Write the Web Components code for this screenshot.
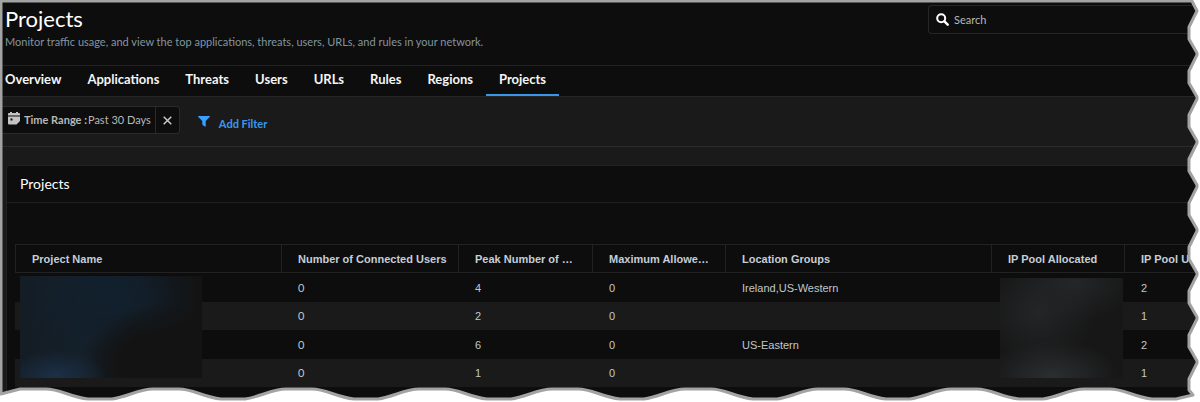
<!DOCTYPE html>
<html lang="en">
<head>
<meta charset="utf-8">
<title>Projects</title>
<style>
html, body { margin: 0; height: 100%; background: #fff; }
body { font-family: Lato, sans-serif; color: #fff; overflow: hidden; }
</style>
</head>
<body>
<app-shell>
  <page-header slot="header" heading="Projects" summary="Monitor traffic usage, and view the top applications, threats, users, URLs, and rules in your network.">
    <search-box></search-box>
  </page-header>
  <tab-bar slot="header">
    <tab-link>Overview</tab-link>
    <tab-link>Applications</tab-link>
    <tab-link>Threats</tab-link>
    <tab-link>Users</tab-link>
    <tab-link>URLs</tab-link>
    <tab-link>Rules</tab-link>
    <tab-link>Regions</tab-link>
    <tab-link active>Projects</tab-link>
  </tab-bar>
  <filter-bar slot="header">
    <filter-chip name="Time Range :">Past 30 Days</filter-chip>
    <add-filter>Add Filter</add-filter>
  </filter-bar>
  <data-panel heading="Projects"><projects-table></projects-table></data-panel>
</app-shell>

<script>
function define(name, html, setup) {
  const template = document.createElement('template');
  template.innerHTML = html;
  customElements.define(name, class extends HTMLElement {
    connectedCallback() {
      if (this.shadowRoot) return;
      this.attachShadow({ mode: 'open' }).append(template.content.cloneNode(true));
      if (setup) setup(this, this.shadowRoot);
    }
  });
}

define('torn-edge', `
<style>
:host { position: absolute; inset: 0; pointer-events: none; z-index: 5; }
svg { display: block; width: 100%; height: 100%; }
.outside { fill: #fff; fill-rule: evenodd; }
.shade { fill: none; stroke: #a3a3a3; stroke-width: 3; stroke-linejoin: round; }
</style>
<svg aria-hidden="true"><path class="outside"/><path class="shade"/></svg>`, (host, root) => {
  const draw = () => {
    const w = host.clientWidth, h = host.clientHeight;
    if (!w || !h) return;
    let d = 'M1 1H' + (w - 8);
    let y = 11;
    d += 'L' + (w - 3) + ' ' + y;
    for (; y + 44 < h - 5; y += 44) {
      d += `L${w - 11} ${y + 16}V${y + 28}L${w - 3} ${y + 42}V${y + 44}`;
    }
    d += `L${w - 11} ${y + 16}V${h - 12}L${w - 7} ${h - 7}`;
    const top = h - 13, low = h - 3;
    const k = Math.floor((w - 120) / 133);
    let x = 100 + 133 * k;
    d += `L${x + 12} ${low}`;
    for (; x > 0; x -= 133) {
      d += `L${x + 10} ${low}H${x - 12}C${x - 30} ${low - 2} ${x - 40} ${top} ${x - 54} ${top}H${x - 80}`;
      if (x > 133) d += `C${x - 94} ${top} ${x - 106} ${low - 2} ${x - 121} ${low}`;
    }
    d += `L1 ${h - 8}Z`;
    root.querySelector('.shade').setAttribute('d', d);
    root.querySelector('.outside').setAttribute('d', `M0 0H${w}V${h}H0Z` + d);
  };
  draw();
  new ResizeObserver(draw).observe(host);
});

define('app-shell', `
<style>
:host { display: flex; flex-direction: column; position: relative; height: 100vh; overflow: hidden; background: #1a1a1a; }
header { padding-top: 3px; background: #0d0d0d; }
main { padding: 18px 0 0 6px; }
</style>
<header><slot name="header"></slot></header>
<main><slot></slot></main>
<torn-edge></torn-edge>`);

define('page-header', `
<style>
:host { display: flex; justify-content: space-between; align-items: flex-start; background: #0d0d0d; border-bottom: 1px solid #222; padding: 2px 0 15px 5px; }
h1 { margin: 0; font-size: 22px; line-height: 28px; font-weight: 400; }
p { margin: 0; font-size: 11px; line-height: 17px; color: #8295a0; }
</style>
<div><h1></h1><p></p></div><slot></slot>`, (host, root) => {
  root.querySelector('h1').textContent = host.getAttribute('heading');
  root.querySelector('p').textContent = host.getAttribute('summary');
});

define('search-box', `
<style>
:host { display: block; width: 272px; }
label { display: flex; align-items: center; gap: 5px; height: 27px; padding-left: 7px; border: 1px solid #262626; border-right: 0; border-radius: 4px 0 0 4px; }
input { flex: 1; min-width: 0; padding: 0; border: 0; outline: 0; background: none; color: #fff; font: 11px/16px Lato, sans-serif; }
input::placeholder { color: #b8b8b8; opacity: 1; }
</style>
<label><svg width="13" height="13" viewBox="0 0 13 13" fill="none" stroke="#fff" stroke-linecap="round" aria-hidden="true"><circle cx="5.2" cy="5.2" r="4" stroke-width="2"/><path d="M8.4 8.4L11.7 11.7" stroke-width="2.4"/></svg>
<input type="text" placeholder="Search" aria-label="Search"></label>`);

define('tab-bar', `
<style>
:host { display: block; background: #0d0d0d; border-bottom: 1px solid #262626; }
nav { display: flex; height: 30px; margin-left: -8px; }
</style>
<nav><slot></slot></nav>`);

define('tab-link', `
<style>
:host { display: block; }
a { display: block; box-sizing: border-box; height: 30px; padding: 0 13px; font-size: 13px; line-height: 27px; font-weight: 700; color: #f5f5f5; text-decoration: none; }
:host([active]) a { border-bottom: 2px solid #3895e8; }
</style>
<a href="#"><slot></slot></a>`);

define('filter-bar', `
<style>
:host { display: flex; align-items: flex-start; gap: 18px; padding: 9px 0 4px; background: #1a1a1a; border-bottom: 1px solid #2b2b2b; }
</style>
<slot></slot>`);

define('filter-chip', `
<style>
:host { display: flex; box-sizing: border-box; height: 28px; background: #0d0d0d; border: 1px solid #2b2b2b; border-left: 0; border-radius: 0 4px 4px 0; font-size: 11px; line-height: 26px; color: #b8b8b8; }
.text { display: flex; padding: 0 4px 0 8px; }
.text svg { margin: 5px 4px 0 0; }
b { margin-right: 1px; }
button { width: 24px; padding: 0; border: 0; border-left: 1px solid #2b2b2b; background: none; color: #c8c8c8; display: grid; place-items: center; }
</style>
<span class="text"><svg width="12" height="13" viewBox="0 0 12 13" fill="#c4c4c4" aria-hidden="true"><path d="M1 1H2V0H4V1H8V0H10V1H11Q12 1 12 2V3.500H0V2Q0 1 1 1Z"/><path fill-rule="evenodd" d="M0 4.500H12V9L8.500 12.500H1Q0 12.500 0 11.500ZM2.500 6.500V8.500H4.500V6.500Z"/></svg><b></b><slot></slot></span>
<button type="button" aria-label="Remove filter"><svg width="9" height="9" viewBox="0 0 9 9" stroke="currentColor" stroke-width="1.500" aria-hidden="true"><path d="M.7.7L8.300 8.300M8.300.7L.7 8.300"/></svg></button>`, (host, root) => {
  root.querySelector('b').textContent = host.getAttribute('name');
});

define('add-filter', `
<style>
:host { display: block; }
button { display: flex; gap: 9px; padding: 0; border: 0; background: none; color: #3898f0; font: 700 11px/36px Lato, sans-serif; }
svg { margin-top: 10px; }
</style>
<button type="button"><svg width="12" height="11" viewBox="0 0 12 11" fill="#38a0ff" aria-hidden="true"><path d="M.4 0H11.600Q12.200.4 11.700 1L7.700 5V10.300Q7.500 11 6.900 10.600L4.600 8.900Q4.300 8.700 4.300 8.300V5L.3 1Q-.2.4.4 0Z"/></svg><slot></slot></button>`);

define('data-panel', `
<style>
section { background: #0d0d0d; border: 1px solid #222; border-right: 0; border-radius: 4px 0 0 0; }
h2 { margin: 0; padding-left: 13px; font-size: 14px; line-height: 36px; font-weight: 400; border-bottom: 1px solid #1f1f1f; }
.body { padding: 41px 0 0 8px; }
</style>
<section><h2></h2><div class="body"><slot></slot></div></section>`, (host, root) => {
  root.querySelector('h2').textContent = host.getAttribute('heading');
});

define('redacted-block', `
<style>
:host { position: absolute; top: 32px; left: 5px; width: 182px; height: 102px; background:
  radial-gradient(ellipse 50px 26px at 36px 100px, #1b3047 0%, #1b304700 100%),
  radial-gradient(ellipse 80px 60px at 140px 88px, #131313 50%, #13131300 100%),
  radial-gradient(ellipse 90px 60px at 90px 20px, #12202d 20%, #12202d00 100%),
  linear-gradient(to right, #141c24 0, #14202a 70px, #131313 150px); }
:host([tone=gray]) { width: 123px; height: 100px; left: 8px; top: 5px; background:
  radial-gradient(ellipse 66px 36px at 52px 98px, #2b2f31 0%, #2b2f3100 100%),
  radial-gradient(ellipse 60px 40px at 74px 4px, #242628 0%, #24262800 100%),
  radial-gradient(ellipse 58px 50px at 38px 34px, #232527 0%, #23252700 100%), #171717; }
</style>`);

define('projects-table', `
<style>
:host { display: block; position: relative; font-family: "Liberation Sans", sans-serif; }
table { width: 100%; table-layout: fixed; border-collapse: separate; border-spacing: 0; font-size: 11px; }
th { box-sizing: border-box; height: 29px; padding: 0 16px; border: 1px solid #222; border-left: 0; text-align: left; font-weight: 700; color: #c5ced8; white-space: nowrap; overflow: hidden; text-overflow: ellipsis; }
th:first-child { border-left: 1px solid #222; }
th:nth-child(2) { padding-right: 8px; }
th:last-child { padding-right: 0; text-overflow: clip; border-right: 0; }
td { height: 28px; padding: 0 16px; line-height: 28px; color: #c0c8cc; white-space: nowrap; box-sizing: border-box; }
td:nth-child(2) { font-family: Lato, sans-serif; }
tbody tr:nth-child(odd) td { height: 29px; }
tbody tr:nth-child(even) { background: #1a1a1a; }
td.pool { position: relative; }
</style>
<table>
<colgroup><col style="width:267px"><col style="width:177px"><col style="width:134px"><col style="width:133px"><col><col style="width:133px"><col style="width:75px"></colgroup>
<thead><tr><th>Project Name</th><th>Number of Connected Users</th><th>Peak Number of Users</th><th>Maximum Allowed Users</th><th>Location Groups</th><th>IP Pool Allocated</th><th>IP Pool Used</th></tr></thead>
<tbody></tbody>
</table>
<redacted-block></redacted-block>`, (host, root) => {
  const rows = [
    ['', 0, 4, 0, 'Ireland,US-Western', '', 2],
    ['', 0, 2, 0, '', '', 1],
    ['', 0, 6, 0, 'US-Eastern', '', 2],
    ['', 0, 1, 0, '', '', 1],
    ['', '', '', '', 'US-Eastern', '', '']
  ];
  const body = root.querySelector('tbody');
  rows.forEach((row, i) => {
    const tr = body.insertRow();
    row.forEach((value, j) => {
      const td = tr.insertCell();
      td.textContent = value;
      if (j === 5 && i === 0) {
        td.className = 'pool';
        const block = document.createElement('redacted-block');
        block.setAttribute('tone', 'gray');
        td.append(block);
      }
    });
  });
});
</script>
</body>
</html>
